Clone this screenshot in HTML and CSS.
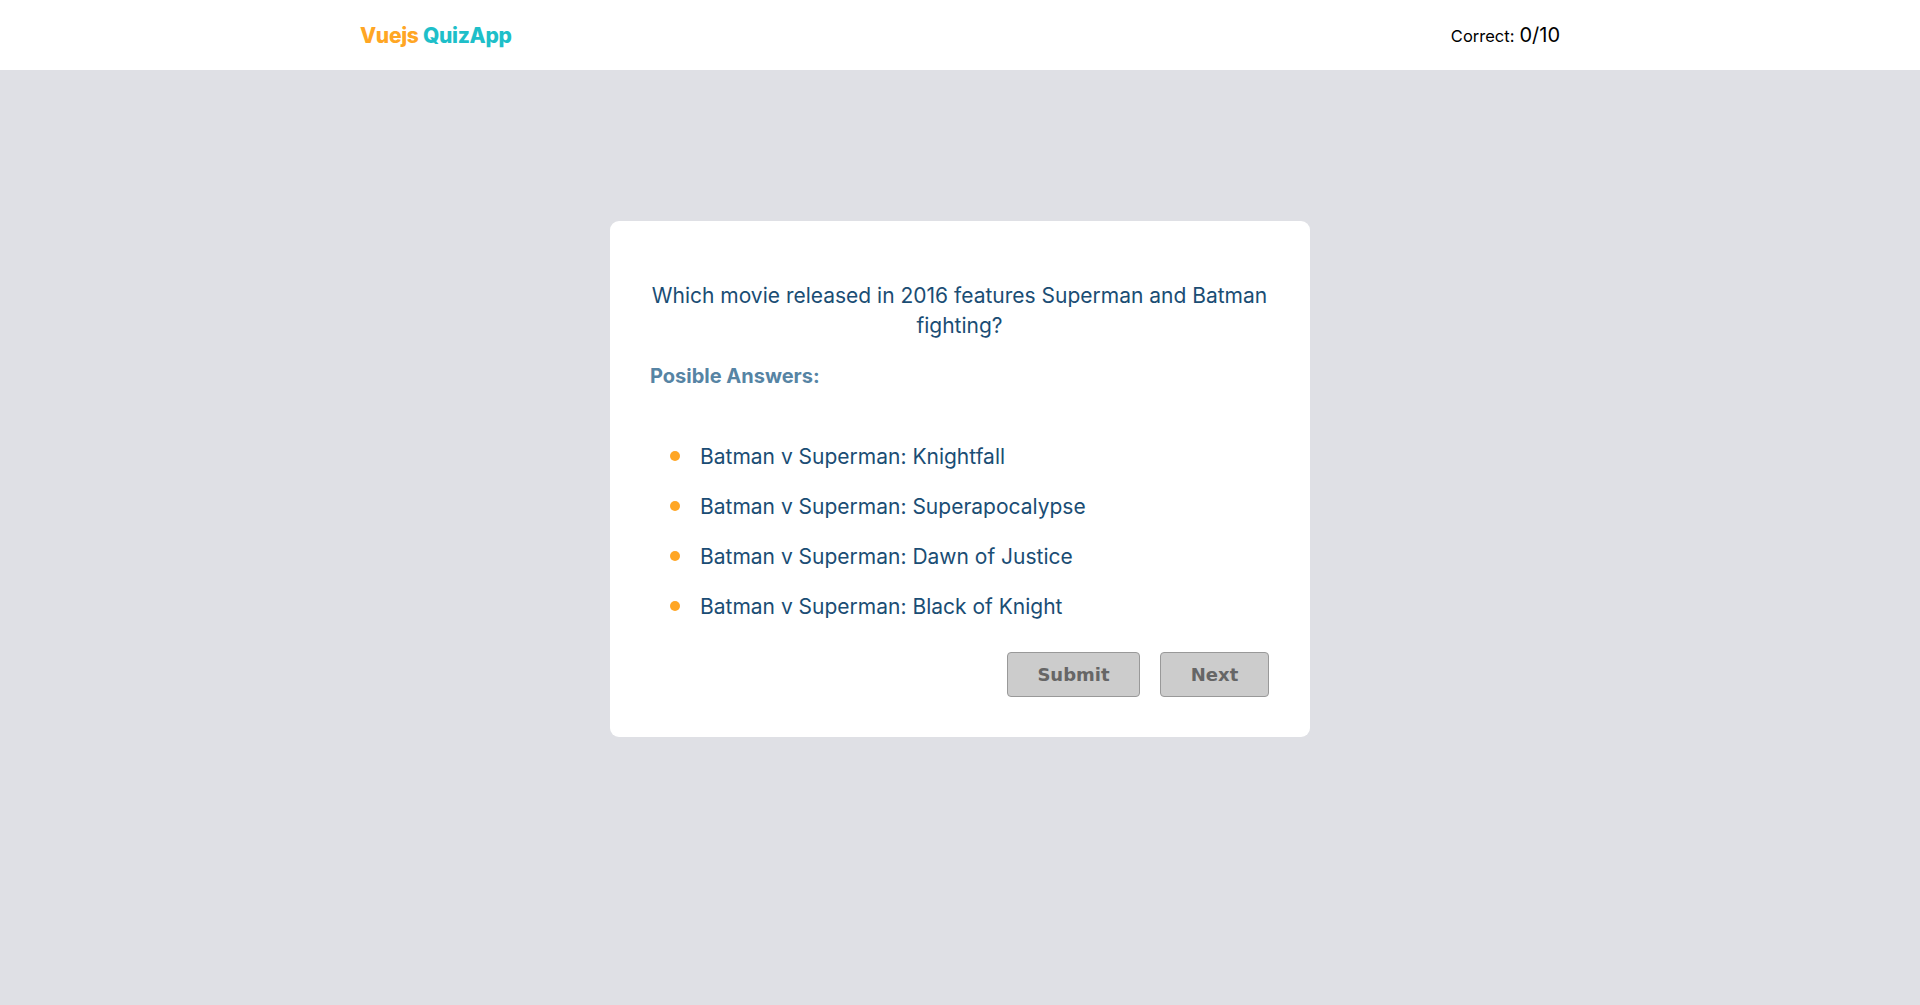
FILE: index.html
```html
<!DOCTYPE html>
<html lang="en">
<head>
<meta charset="utf-8">
<title>Vuejs QuizApp</title>
<link rel="stylesheet" href="styles.css">
</head>
<body>
<header class="topbar">
  <div class="container topbar-inner">
    <div class="logo"><span class="logo-vue">Vuejs</span> <span class="logo-quiz">QuizApp</span></div>
    <div class="score"><span class="score-label">Correct:</span> <span class="score-value">0/10</span></div>
  </div>
</header>
<main class="main">
  <section class="card">
    <p class="question">Which movie released in 2016 features Superman and Batman fighting?</p>
    <h3 class="answers-title">Posible Answers:</h3>
    <ul class="answers">
      <li class="answer">Batman v Superman: Knightfall</li>
      <li class="answer">Batman v Superman: Superapocalypse</li>
      <li class="answer">Batman v Superman: Dawn of Justice</li>
      <li class="answer">Batman v Superman: Black of Knight</li>
    </ul>
    <div class="actions">
      <button class="btn btn-submit">Submit</button>
      <button class="btn btn-next">Next</button>
    </div>
  </section>
</main>
</body>
</html>
```
FILE: styles.css
```css
* { box-sizing: border-box; }
html, body { margin: 0; padding: 0; }
body {
  background: #dfe0e5;
  font-family: "Inter", "Open Sans", sans-serif;
  min-height: 1005px;
}
.container { width: 1200px; margin: 0 auto; }
.topbar { background: #ffffff; height: 70px; }
.topbar-inner {
  height: 70px;
  display: flex;
  align-items: center;
  justify-content: space-between;
}
.logo { font-weight: 800; font-size: 21px; letter-spacing: -0.3px; }
.logo-vue { color: #ffa624; }
.logo-quiz { color: #1ebfc9; }
.score { color: #000; display: flex; align-items: baseline; gap: 5px; }
.score-label { font-size: 16.5px; }
.score-value { font-size: 20px; }

.main { display: flex; justify-content: center; padding-top: 151px; }
.card {
  width: 700px;
  background: #fff;
  border-radius: 9px;
  padding: 40px 41px 40px 40px;
}
.question {
  margin: 20px 0 0;
  text-align: center;
  font-size: 21px;
  line-height: 30px;
  color: #1a4d74;
}
.answers-title {
  margin: 21px 0 0;
  font-size: 20px;
  line-height: 28px;
  font-weight: 700;
  color: #5684a4;
}
.answers { list-style: none; margin: 41px 0 0; padding: 0; }
.answer {
  height: 50px;
  display: flex;
  align-items: center;
  padding-left: 20px;
  font-size: 21px;
  color: #1a4d74;
}
.answer::before {
  content: "";
  width: 10px;
  height: 10px;
  border-radius: 50%;
  background: #ffa624;
  margin-right: 20px;
  flex: none;
}
.actions {
  margin-top: 21px;
  display: flex;
  justify-content: flex-end;
  gap: 20px;
}
.btn {
  height: 45px;
  padding: 0;
  background: #cccccc;
  border: 1px solid #999;
  border-radius: 4px;
  font-family: "DejaVu Sans", Verdana, sans-serif;
  font-weight: 700;
  font-size: 18px;
  color: #666;
}
.btn-submit { width: 133px; }
.btn-next { width: 109px; }
```
